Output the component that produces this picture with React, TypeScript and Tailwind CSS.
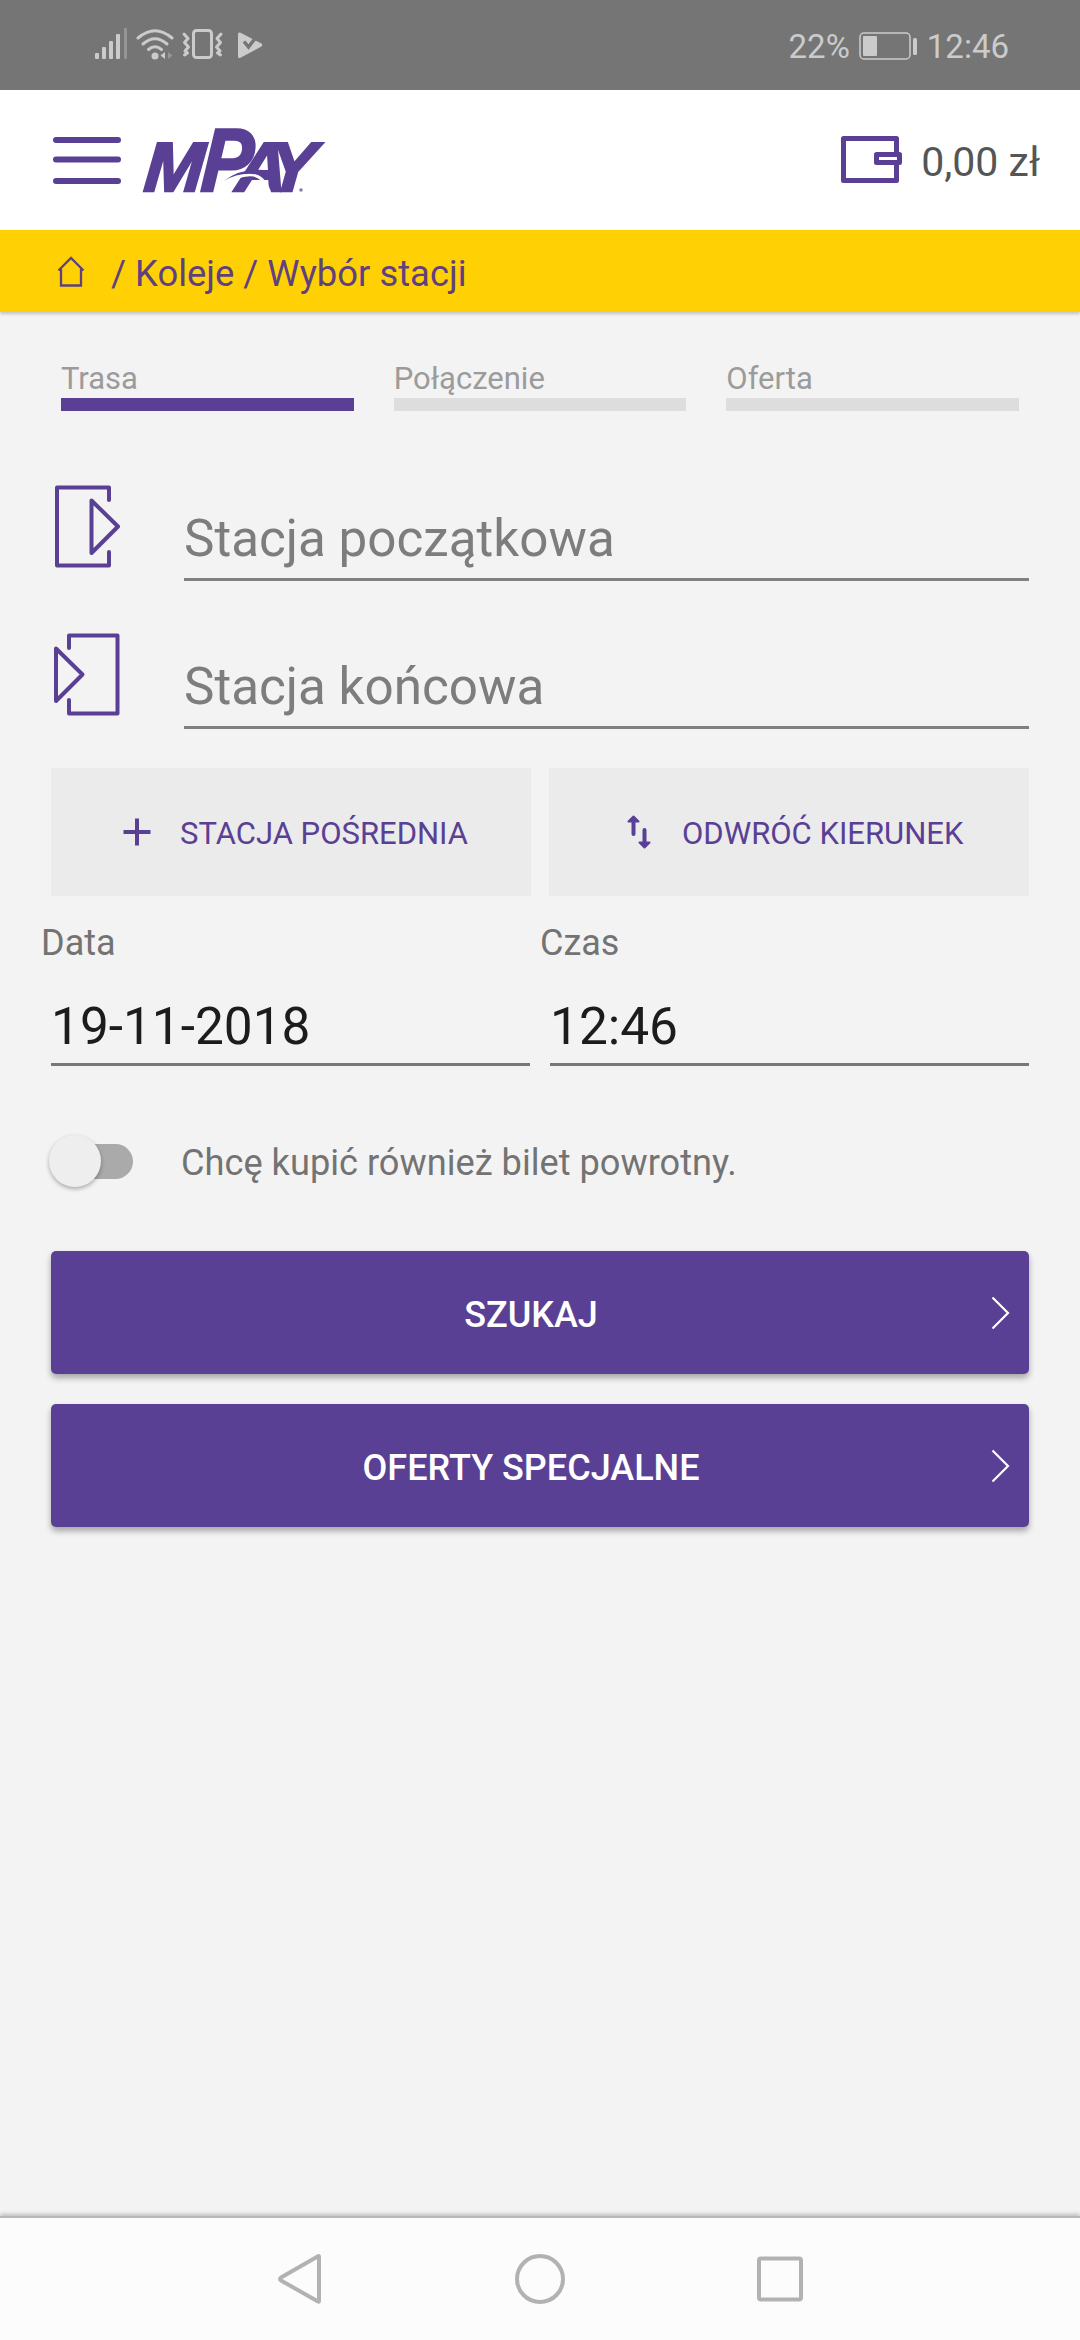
import type { ReactNode } from "react";

function StatusBar() {
    return (
        <div className="flex h-[90px] items-center justify-between bg-[#757575] pl-[94px] pr-[71px] text-[33px] text-[#cbcbcb]">
            <svg width="170" height="36" viewBox="94 28 170 36" fill="none">
                <g fill="#cbcbcb">
                    <rect x="95" y="54" width="4" height="6" rx="1" />
                    <rect x="102" y="48" width="4" height="12" rx="1" />
                    <rect x="109" y="42" width="4" height="18" rx="1" />
                    <rect x="116" y="35" width="4" height="25" rx="1" />
                    <rect x="124" y="29" width="3" height="31" rx="1" fill="#959595" />
                    <circle cx="155" cy="57" r="3.5" />
                    <path d="M165 53v7l-4.500 -3.500z" />
                    <path d="M168 53v7l4.500 -3.500z" fill="#969696" />
                    <path d="M240 33.500L261.500 44.500Q263 46 261.500 47.500L240 59Q238 59.500 238 57.500V35Q238 33 240 33.500Z" />
                </g>
                <g stroke="#cbcbcb" strokeWidth="3" strokeLinecap="round" strokeLinejoin="round">
                    <path d="M138 39Q155 24.500 172 39" />
                    <path d="M143 45Q155 34.500 167 45" />
                    <path d="M148.500 50.500Q155 45 161.500 50.500" />
                    <rect x="193.500" y="31.500" width="18" height="27" rx="3" />
                    <path d="M184 35l4 4.500l-3.500 4l4 4.500l-3.500 4l2.500 2l-3 2" />
                    <path d="M221 35l-4 4.500l3.500 4l-4 4.500l3.500 4l-2.500 2l3 2" />
                </g>
                <path d="M244 42.500l4.500 5.500l10 -13" stroke="#757575" strokeWidth="3.500" />
            </svg>
            <div className="flex items-center pt-[3px] leading-[40px]">
                <span>22%</span>
                <svg className="-mt-[1px] ml-[9px] mr-[8px]" width="60" height="28" viewBox="0 0 60 28">
                    <rect x="1" y="1" width="50" height="26" rx="4" fill="none" stroke="#cbcbcb" strokeWidth="1.5" />
                    <rect x="4" y="4" width="14" height="20" rx="1" fill="#cbcbcb" />
                    <rect x="54" y="6" width="4" height="17" rx="1.500" fill="#cbcbcb" />
                </svg>
                <span>12:46</span>
            </div>
        </div>
    );
}

function Logo() {
    return (
        <svg className="overflow-visible" width="186" height="68" viewBox="142 126 186 68" fill="#5a4094" fontFamily="'Liberation Sans', sans-serif" fontWeight="700" fontStyle="italic">
            <g stroke="#5a4094" strokeWidth="2.500">
                <text transform="translate(143 191) skewX(-5) scale(1.02 1)" fontSize="69.5">M</text>
                <text transform="translate(235 191) skewX(-5)" fontSize="69.5">A</text>
                <text transform="translate(267 191) skewX(-5)" fontSize="69.5">Y</text>
            </g>
            <text transform="translate(200 191) skewX(-4) scale(.86 1)" fontSize="89.5" stroke="#5a4094" strokeWidth="2.500">P</text>
            <path d="M222 185Q240 173 254 175Q266 179 270 194" fill="none" stroke="#fff" strokeWidth="3" />
            <path d="M224 181Q240 168 264 170L266 177Q244 169 224 181Z" />
            <circle cx="301" cy="190" r="1.800" fill="#8a7bb0" />
        </svg>
    );
}

function Navbar() {
    return (
        <header className="flex h-[140px] items-center justify-between bg-white pl-[53px] pr-[40px]">
            <div className="flex items-center">
                <svg width="68" height="50" viewBox="0 0 68 50" stroke="#5a4094" strokeWidth="6" strokeLinecap="round">
                    <path d="M3 5H65M3 24.500H65M3 46H65" />
                </svg>
                <div className="ml-[21px]">
                    <Logo />
                </div>
            </div>
            <div className="flex items-center">
                <svg width="62" height="48" viewBox="0 0 62 48" fill="none" stroke="#5a4094" strokeWidth="5" strokeLinejoin="round">
                    <path d="M55.500 17V2.500H2.500V44.500H55.500V29" />
                    <rect x="35.500" y="18.500" width="23" height="8" />
                </svg>
                <span className="ml-[18px] pt-[3px] text-[41px] leading-[48px] text-[#555]">0,00 zł</span>
            </div>
        </header>
    );
}

function Breadcrumb() {
    return (
        <div className="flex h-[82px] items-center bg-[#ffd105] pl-[57px] text-[36.4px] text-[#5f4180] shadow-[0_2px_3px_rgba(0,0,0,0.2)]">
            <svg className="mt-[2px]" width="28" height="32" viewBox="0 0 28 32" fill="none" stroke="currentColor" strokeWidth="2.300">
                <path d="M1.500 14.500L14 2L26.500 14.500M4 13V29.500H24V13" />
            </svg>
            <span className="ml-[26px] pt-[5px] leading-[44px]">/ Koleje / Wybór stacji</span>
        </div>
    );
}

function Step({ label, active }: { label: string; active?: boolean }) {
    return (
        <div>
            <p className="mb-px text-[31px] leading-[36px] text-[#9b9b9b]">{label}</p>
            <div className={active ? "h-[13px] bg-[#5a4094]" : "h-[13px] bg-[#dddddd]"} />
        </div>
    );
}

function StationField({ icon, placeholder }: { icon: ReactNode; placeholder: string }) {
    return (
        <div className="flex h-[96px]">
            <div className="w-[133px]">{icon}</div>
            <div className="flex flex-1 items-end border-b-[3px] border-[#808080] pb-[9px] text-[51.2px] leading-[60px] text-[#7d7d7d]">
                {placeholder}
            </div>
        </div>
    );
}

function DateField({ label, value }: { label: string; value: string }) {
    return (
        <div>
            <p className="-ml-[10px] text-[36px] leading-[44px] text-[#737373]">{label}</p>
            <div className="mt-[32px] border-b-[3px] border-[#787878] pb-[6px] text-[51.4px] leading-[60px] text-[#1c1c1c]">{value}</div>
        </div>
    );
}

function ActionButton({ label }: { label: string }) {
    return (
        <button className="flex h-[123px] w-full items-center rounded-[5px] bg-[#5a4094] pr-[19px] text-[36px] font-medium text-white shadow-[0_4px_6px_rgba(0,0,0,0.32)]">
            <span className="flex-1 pl-[20px] pt-[4px] text-center">{label}</span>
            <svg width="19" height="34" viewBox="0 0 19 34" fill="none" stroke="#fff" strokeWidth="2.200">
                <path d="M1.500 1.500L17 17L1.500 32.500" />
            </svg>
        </button>
    );
}

export default function App() {
    return (
        <div className="flex h-[2340px] w-[1080px] flex-col overflow-hidden bg-[#f3f3f3] font-['Roboto',sans-serif]">
            <StatusBar />
            <Navbar />
            <Breadcrumb />

            <main className="flex-1 px-[51px]">
                <div className="mx-[10px] grid grid-cols-3 gap-[40px] pt-[49px]">
                    <Step label="Trasa" active />
                    <Step label="Połączenie" />
                    <Step label="Oferta" />
                </div>

                <div className="mt-[74px] flex flex-col gap-[52px]">
                    <StationField
                        placeholder="Stacja początkowa"
                        icon={
                            <svg width="72" height="84" viewBox="0 0 72 84" fill="none" stroke="#5a4094" strokeWidth="4" strokeLinecap="round" strokeLinejoin="round">
                                <path d="M58 15V2.500H6V80.500H58V67" />
                                <path d="M40.500 15.500V68L67 41.500Z" />
                            </svg>
                        }
                    />
                    <StationField
                        placeholder="Stacja końcowa"
                        icon={
                            <svg width="72" height="84" viewBox="0 0 72 84" fill="none" stroke="#5a4094" strokeWidth="4" strokeLinecap="round" strokeLinejoin="round">
                                <path d="M18 15V2.500H66.500V80.500H18V67" />
                                <path d="M5 15.500V68L31.500 41.500Z" />
                            </svg>
                        }
                    />
                </div>

                <div className="mt-[39px] grid grid-cols-2 gap-[18px] text-[31px] text-[#5a4094]">
                    <button className="flex h-[128px] items-center bg-[#ebebeb] pl-[72px]">
                        <svg width="28" height="28" viewBox="0 0 28 28" stroke="currentColor" strokeWidth="4">
                            <path d="M14 .5V27.500M.5 14H27.500" />
                        </svg>
                        <span className="ml-[29px] pt-[4px]">STACJA POŚREDNIA</span>
                    </button>
                    <button className="flex h-[128px] items-center bg-[#ebebeb] pl-[77px]">
                        <svg width="26" height="36" viewBox="0 0 26 36" fill="none" stroke="currentColor" strokeWidth="4" strokeLinecap="round" strokeLinejoin="round">
                            <path d="M7.500 5V20M18.500 16V31" />
                            <path d="M7.500 2.500L2.500 7.500H12.500ZM18.500 33.500L13.500 28.500H23.500Z" fill="currentColor" strokeWidth="2" />
                        </svg>
                        <span className="ml-[30px] pt-[4px]">ODWRÓĆ KIERUNEK</span>
                    </button>
                </div>

                <div className="mt-[25px] grid grid-cols-2 gap-[20px]">
                    <DateField label="Data" value="19-11-2018" />
                    <DateField label="Czas" value="12:46" />
                </div>

                <div className="mt-[69px] flex h-[52px] items-center">
                    <div className="-ml-[2px] flex h-[35px] w-[84px] items-center rounded-full bg-[linear-gradient(to_right,transparent_30px,#aaaaaa_30px)]">
                        <div className="size-[52px] shrink-0 rounded-full bg-[#eeeeee] shadow-[0_2px_4px_rgba(0,0,0,0.3)]" />
                    </div>
                    <span className="ml-[48px] pt-[5px] text-[36.2px] text-[#737373]">Chcę kupić również bilet powrotny.</span>
                </div>

                <div className="mt-[64px] flex flex-col gap-[30px]">
                    <ActionButton label="SZUKAJ" />
                    <ActionButton label="OFERTY SPECJALNE" />
                </div>
            </main>

            <nav className="flex h-[124px] items-center justify-between border-t-2 border-[#b8b8b8] bg-[#fcfcfc] pl-[274px] pr-[274px] shadow-[0_-2px_4px_rgba(0,0,0,0.22)]">
                <svg width="52" height="54" viewBox="0 0 52 54" fill="none" stroke="#b2b2b2" strokeWidth="4" strokeLinejoin="round">
                    <path d="M44.500 4Q45 4 45 5V49Q45 50 44 49.500L7 28.500Q5 27 7 25.500Z" />
                </svg>
                <svg width="54" height="54" viewBox="0 0 54 54" fill="none" stroke="#b2b2b2" strokeWidth="4">
                    <circle cx="27" cy="27" r="23" />
                </svg>
                <svg width="52" height="54" viewBox="0 0 52 54" fill="none" stroke="#b2b2b2" strokeWidth="4">
                    <rect x="5" y="6.500" width="42" height="41" rx="2" />
                </svg>
            </nav>
        </div>
    );
}
